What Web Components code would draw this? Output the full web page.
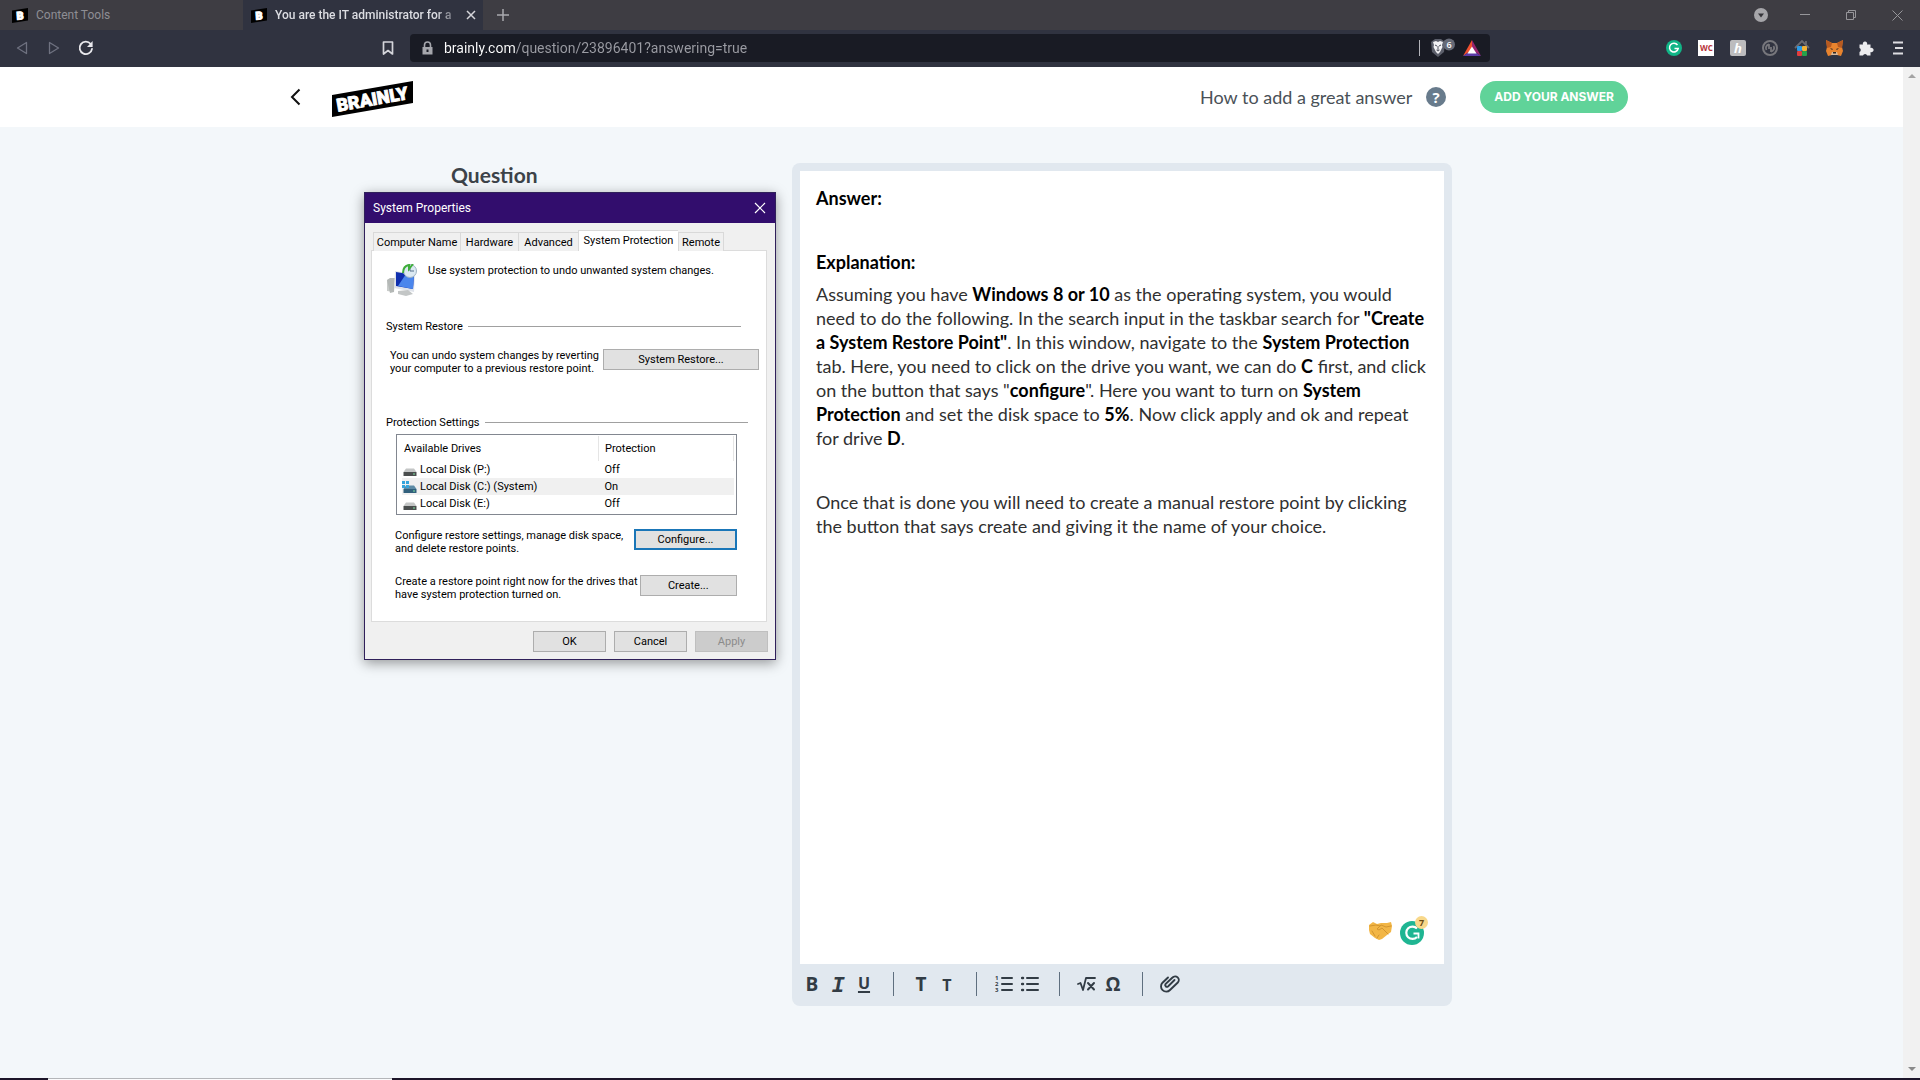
<!DOCTYPE html>
<html lang="en">
<head>
<meta charset="utf-8">
<title>Brainly</title>
<style>
html, body { margin: 0; height: 100%; overflow: hidden; background: #f3f7fa; }
body { font-family: "Open Sans", "Liberation Sans", sans-serif; }
</style>
</head>
<body>
<brainly-desktop></brainly-desktop>
<script>
const define = (name, html) => {
  const tpl = document.createElement('template');
  tpl.innerHTML = html;
  customElements.define(name, class extends HTMLElement {
    constructor() {
      super();
      this.attachShadow({ mode: 'open' }).append(tpl.content.cloneNode(true));
    }
  });
};
const resetButton = 'button{font:inherit;color:inherit;border:0;background:none;padding:0;margin:0;display:flex;align-items:center;justify-content:center}svg{display:block}';

define('brand-mark', `
<style>:host{display:flex;width:16px;height:15px;color:#fff}svg{display:block}
text{font:900 11px "Roboto","Liberation Sans",sans-serif;fill:#fff;stroke:#fff;stroke-width:1}</style>
<svg width="16" height="15" viewBox="0 0 16 15"><path d="M0 2.500L16 0V12.500L0 15Z" fill="#000"/><text x="4.500" y="11.500" transform="rotate(-4 8 7)">B</text></svg>`);

define('tab-strip', `
<style>${resetButton}
:host{display:flex;height:30px;background:#3e3d43;color:#8e8e94;font:12px/16px "Roboto",sans-serif;overflow:hidden}
.tab{display:flex;align-items:center;gap:8px;width:240px;box-sizing:border-box;padding:0 8px}
.first{width:243px;padding-left:12px}
.active{background:#303340;color:#dcdde2}
.title{flex:1;white-space:nowrap;text-align:left;font-weight:400}
.active .title{flex:0 0 180px;font-weight:500;-webkit-mask-image:linear-gradient(90deg,#000 90%,rgba(0,0,0,.3))}
.plus{width:40px;color:#b4b4ba}
.win{margin-left:auto;display:flex;align-items:center}
.win button{width:46px;height:30px}
.win .search{width:42px}
</style>
<div class="tab first"><brand-mark></brand-mark><span class="title">Content Tools</span></div>
<div class="tab active"><brand-mark></brand-mark><span class="title">You are the IT administrator for a</span>
<button aria-label="Close tab"><svg width="16" height="16" viewBox="0 0 16 16"><path d="M4 4l8 8M12 4l-8 8" stroke="#d5d5da" stroke-width="1.500"/></svg></button></div>
<button class="plus" aria-label="New tab"><svg width="12" height="12" viewBox="0 0 12 12"><path d="M6 0v12M0 6h12" stroke="#a9a9af" stroke-width="1.500"/></svg></button>
<div class="win">
<button class="search" aria-label="Search tabs"><svg width="14" height="14" viewBox="0 0 14 14"><circle cx="7" cy="7" r="7" fill="#a6a6aa"/><path d="M4 5.500h6L7 9.500z" fill="#35353a"/></svg></button>
<button aria-label="Minimize"><svg width="10" height="10" viewBox="0 0 10 10"><path d="M0 4.500h10" stroke="#96969a"/></svg></button>
<button aria-label="Restore"><svg width="10" height="10" viewBox="0 0 10 10"><path d="M.5 2.500h7v7h-7zM2.500 2.500v-2h7v7h-2" fill="none" stroke="#96969a"/></svg></button>
<button aria-label="Close"><svg width="11" height="11" viewBox="0 0 11 11"><path d="M.5.5l10 10M10.500.5l-10 10" stroke="#96969a"/></svg></button>
</div>`);

define('nav-bar', `
<style>${resetButton}
:host{display:flex;align-items:center;height:37px;background:#303340;box-sizing:border-box;padding-bottom:1px}
.left{flex:0 0 410px;display:flex;align-items:center;box-sizing:border-box;padding:0 10px 0 6px}
.left button,.right button{width:32px;height:32px}
.left .mark{margin-left:auto;width:24px}
.bar{flex:1;min-width:0;display:flex;align-items:center;height:28px;background:#191b24;border-radius:4px;box-sizing:border-box;padding:0 8px 0 12px}
input{flex:1;min-width:0;border:0;outline:0;margin:0 0 0 11px;padding:0;background:linear-gradient(90deg,#fff 72px,#9b9ca3 72px);-webkit-background-clip:text;background-clip:text;color:transparent;font:14px/20px "Roboto",sans-serif;height:20px}
.rule{width:1px;height:16px;background:#b3b4ba;margin-right:10px}
.right{flex:0 0 430px;display:flex;align-items:center;justify-content:flex-end;box-sizing:border-box;padding-right:6px}
text{font-family:"Open Sans",sans-serif}
</style>
<div class="left">
<button aria-label="Back"><svg width="12" height="14" viewBox="0 0 12 14"><path d="M10.500 1.500v11L1.500 7z" fill="none" stroke="#6f7280" stroke-width="1.300" stroke-linejoin="round"/></svg></button>
<button aria-label="Forward"><svg width="12" height="14" viewBox="0 0 12 14"><path d="M1.500 1.500v11l9-5.500z" fill="none" stroke="#6f7280" stroke-width="1.300" stroke-linejoin="round"/></svg></button>
<button aria-label="Reload"><svg width="16" height="16" viewBox="0 0 16 16"><path d="M12.700 4A6.200 6.200 0 1 0 14 8.800" fill="none" stroke="#e8e8ec" stroke-width="1.800" stroke-linecap="round"/><path d="M14.600 1v6H9z" fill="#e8e8ec"/></svg></button>
<button class="mark" aria-label="Bookmark"><svg width="12" height="14" viewBox="0 0 12 14"><path d="M1.500 1h9v12L6 9.500 1.500 13z" fill="none" stroke="#d4d5da" stroke-width="1.700" stroke-linejoin="round"/></svg></button>
</div>
<div class="bar">
<svg width="11" height="14" viewBox="0 0 11 14"><path d="M2.500 6V4a3 3 0 0 1 6 0v2" fill="none" stroke="#a5a6ac" stroke-width="1.600"/><path fill-rule="evenodd" d="M.5 6h10v7.500H.5zM4.500 8.500v2.500h2V8.500z" fill="#a5a6ac"/></svg>
<input aria-label="Address" value="brainly.com/question/23896401?answering=true">
<span class="rule"></span>
<button aria-label="Shields"><svg width="26" height="20" viewBox="0 0 26 20"><path d="M1 4l4-3h6l4 3-1 10-6 5-6-5z" fill="#5b5e6a"/><path d="M3 4l3-1 2 1 2-1 3 1-1 3 .5 2-2.500 5-2 2-2-2L3.500 9 4 7z" fill="#f2f2f5"/><path d="M5 7l2 1M11 7L9 8M8 8v4M6.500 12l1.500 1 1.500-1" stroke="#4a4d59" fill="none"/><circle cx="19" cy="6.500" r="6" fill="#666a77"/><text x="16.500" y="9.500" font-size="9" font-weight="600" fill="#fff">6</text></svg></button>
<button aria-label="Rewards"><svg width="20" height="18" viewBox="0 0 20 18" style="margin-left:6px"><path d="M10 1L1 17l9-6z" fill="#f0502f"/><path d="M10 1l9 16-9-6z" fill="#97246e"/><path d="M1 17h18l-9-6z" fill="#5b3aa6"/><path d="M10 7.500l4.500 7h-9z" fill="#fff"/></svg></button>
</div>
<div class="right">
<button aria-label="Grammarly"><svg width="16" height="16" viewBox="0 0 16 16"><circle cx="8" cy="8" r="8" fill="#11b587"/><path d="M11.500 5A4.400 4.400 0 1 0 12.200 8.500H8.500" fill="none" stroke="#fff" stroke-width="1.500"/></svg></button>
<button aria-label="WC"><svg width="16" height="16" viewBox="0 0 16 16"><path fill="#fff" d="M0 0h16v16H0z"/><text x="2" y="11" font-size="8" font-weight="700" fill="#b8323a">WC</text></svg></button>
<button aria-label="Honey"><svg width="16" height="16" viewBox="0 0 16 16"><rect width="16" height="16" rx="2" fill="#bcbcbe"/><text x="4" y="13" font-size="13" font-style="italic" font-weight="700" fill="#fff">h</text></svg></button>
<button aria-label="Sync"><svg width="16" height="16" viewBox="0 0 16 16"><circle cx="8" cy="8" r="7" fill="none" stroke="#77777c" stroke-width="2"/><path d="M7 4.500a3.500 3.500 0 0 0-2.500 5.500M9 11.500a3.500 3.500 0 0 0 2.500-5.500M7 4v5M9 7v5" fill="none" stroke="#77777c" stroke-width="1.800"/></svg></button>
<button aria-label="Home"><svg width="16" height="18" viewBox="0 0 16 18"><path d="M1 9l7-7 7 7M12 2v4" fill="none" stroke="#6a6a70" stroke-width="1.800"/><rect x="3" y="7" width="5" height="5" rx="1" fill="#2a9be8"/><rect x="8" y="7" width="5" height="5" rx="1" fill="#f2b134"/><rect x="3" y="12" width="5" height="5" rx="1" fill="#e23d3d"/><rect x="8" y="12" width="5" height="5" rx="1" fill="#26a14b"/></svg></button>
<button aria-label="MetaMask"><svg width="17" height="16" viewBox="0 0 17 16"><path d="M0 0l6 3h5l6-3-1 7 1 4-2 5-4-1H6l-4 1-2-5 1-4z" fill="#e8842e"/><path d="M0 0l6 3-1 4-4 1zM17 0l-6 3 1 4 4 1z" fill="#b85a20"/><path d="M6 12h5l1 3H5z" fill="#d9b99a"/><path d="M4 8l3 1-1 1zM13 8l-3 1 1 1zM7 12h3v1.500H7z" fill="#2d2926"/></svg></button>
<button aria-label="Extensions"><svg width="16" height="16" viewBox="0 0 16 16"><path d="M1.500 4.500H5a2.200 2.200 0 1 1 4 0h3.500V8a2.200 2.200 0 1 1 0 4v3.500H9.200a2.200 2.200 0 0 0-4.200 0H1.500V12a2.200 2.200 0 0 0 0-4z" fill="#ececee"/></svg></button>
<button aria-label="Menu"><svg width="12" height="14" viewBox="0 0 12 14"><path d="M1 1.500h10M3 7h8M1 12.500h10" stroke="#dddde1" stroke-width="2"/></svg></button>
</div>`);

define('site-header', `
<style>${resetButton}
:host{display:block;background:#fff}
.in{max-width:1353px;margin:0 auto;height:60px;display:flex;align-items:center}
.back{width:40px;height:40px}
.logo{margin:4px 0 0 17px}
.logo text{font:900 18px "Roboto",sans-serif;fill:#fff;stroke:#fff;stroke-width:.8}
.how{margin-left:auto;display:flex;align-items:center;gap:14px;color:#4a5157;font:400 18px/24px var(--copy);text-decoration:none}
.add{margin-left:34px;height:32px;padding:0 14px;border-radius:16px;background:#60d399;color:#fff;font:700 12px/16px "Inter",sans-serif}
.q{font:700 15px "Open Sans",sans-serif}
.how svg{overflow:visible}
</style>
<div class="in">
<button class="back" aria-label="Back"><svg width="11" height="18" viewBox="0 0 11 18"><path d="M9.500 1.500L2 9l7.500 7.500" fill="none" stroke="#111" stroke-width="2"/></svg></button>
<a class="logo" href="#" aria-label="Brainly home"><svg width="81" height="38" viewBox="0 0 81 38"><path d="M0 15L81 1v22L0 37z" fill="#000"/><g transform="rotate(-10 40 19)"><text x="4" y="25.500">BRAINLY</text></g></svg></a>
<a class="how" href="#">How to add a great answer<svg width="20" height="20" viewBox="0 0 20 20"><circle cx="10" cy="10" r="10" fill="#687b8c"/><text class="q" x="6.500" y="15.500" fill="#fff">?</text></svg></a>
<button class="add">ADD YOUR ANSWER</button>
</div>`);

define('format-bar', `
<style>${resetButton}
:host{display:flex;align-items:center;height:42px;box-sizing:border-box;padding:0 0 2px 7px;margin-left:-8px;color:#323c45}
.g{display:flex;align-items:center;height:24px}
.g+.g{border-left:1px solid #5f6f7f;margin-left:16px;padding-left:14px}
button{width:26px;height:26px;font:700 19px/24px "Open Sans",sans-serif}
.i{font-style:italic;font-family:"Liberation Mono",monospace;font-size:22px;padding-top:5px}
.u{text-decoration:underline;text-decoration-thickness:2px;text-underline-offset:2px;font-size:16px;padding-bottom:2px}
.t{font-size:16px;padding-top:2px}
text{font:700 6px "Open Sans",sans-serif;fill:#323c45}
</style>
<div class="g"><button aria-label="Bold">B</button><button class="i" aria-label="Italic">I</button><button class="u" aria-label="Underline">U</button></div>
<div class="g"><button aria-label="Large text">T</button><button class="t" aria-label="Small text">T</button></div>
<div class="g"><button aria-label="Numbered list"><svg width="18" height="18" viewBox="0 0 18 18"><path d="M7 3h10M7 9h10M7 15h10" stroke="#323c45" stroke-width="2" stroke-linecap="round"/><text x="0" y="5">1</text><text x="0" y="11">2</text><text x="0" y="17">3</text></svg></button><button aria-label="Bulleted list"><svg width="18" height="18" viewBox="0 0 18 18"><path d="M6 3h11M6 9h11M6 15h11" stroke="#323c45" stroke-width="2" stroke-linecap="round"/><path d="M1 3h1M1 9h1M1 15h1" stroke="#323c45" stroke-width="2.500" stroke-linecap="round"/></svg></button></div>
<div class="g"><button aria-label="Equation"><svg width="20" height="18" viewBox="0 0 20 18"><path d="M1 9l2.500-1L6 15 9 3h9" fill="none" stroke="#323c45" stroke-width="1.800" stroke-linecap="round" stroke-linejoin="round"/><path d="M11 8l6 6.500M17 8l-6 6.500" stroke="#323c45" stroke-width="2" stroke-linecap="round"/></svg></button><button aria-label="Symbols">Ω</button></div>
<div class="g"><button aria-label="Attach"><svg width="22" height="20" viewBox="0 0 22 20"><path d="M15.500 6.500L9 13a1.800 1.800 0 0 1-2.500-2.500l7-6.500a3.600 3.600 0 0 1 5.300 5L11 16.500a5.200 5.200 0 0 1-7.500-7.300L9 4" transform="translate(0 -.5)" fill="none" stroke="#323c45" stroke-width="1.900" stroke-linecap="round"/></svg></button></div>`);

define('answer-editor', `
<style>
:host{display:flex;flex-direction:column;box-sizing:border-box;width:660px;height:843px;padding:8px 8px 0;background:#e1e8ef;border-radius:8px}
.paper{flex:1;background:#fff;box-sizing:border-box;padding:15px 16px;position:relative;color:#303030;font:400 18px/24px var(--copy)}
.text{outline:0;white-space:nowrap}
p{margin:0 0 8px;min-height:24px}
b{font-weight:700;color:#000}
.float{position:absolute;right:16px;bottom:18px;display:flex;align-items:center;gap:8px}
svg{display:block}
text{font:700 9px "Open Sans",sans-serif}
</style>
<div class="paper">
<div class="text" contenteditable="true" role="textbox" aria-label="Answer">
<p><b>Answer:</b></p><p></p><p><b>Explanation:</b></p>
<p>Assuming you have <b>Windows 8 or 10</b> as the operating system, you would<br>need to do the following. In the search input in the taskbar search for <b>"Create</b><br><b>a System Restore Point"</b>. In this window, navigate to the <b>System Protection</b><br>tab. Here, you need to click on the drive you want, we can do <b>C</b> first, and click<br>on the button that says "<b>configure</b>". Here you want to turn on <b>System</b><br><b>Protection</b> and set the disk space to <b>5%</b>. Now click apply and ok and repeat<br>for drive <b>D</b>.</p>
<p></p>
<p>Once that is done you will need to create a manual restore point by clicking<br>the button that says create and giving it the name of your choice.</p>
</div>
<div class="float">
<svg width="23" height="20" viewBox="0 0 23 20"><path d="M0 4l4-3 4 2 4-1 6 0 4-1 1 4-1 6-4 3-5 4-3 1-4-2-5-4-1-4z" fill="#f2b646"/><path d="M1 5l6-1 4 1M22 5l-5 1-5-2-4 4 2 1 3-2 6 6M6 15l-3-5M8 17l2-3" fill="none" stroke="#d2952f" stroke-linecap="round"/></svg>
<svg width="28" height="30" viewBox="0 0 28 30"><circle cx="12" cy="17" r="12" fill="#1fb592"/><path d="M17 12.500a6.200 6.200 0 1 0 0 8.500" fill="none" stroke="#fff" stroke-width="2.200"/><path d="M13.500 17.500h5v5" fill="none" stroke="#fff" stroke-width="1.800"/><circle cx="21.500" cy="6.500" r="6.500" fill="#f8d88a"/><text x="19" y="10" fill="#6b4a12">7</text></svg>
</div>
</div>
<format-bar></format-bar>`);

define('page-scrollbar', `
<style>:host{display:flex;flex-direction:column;justify-content:space-between;align-items:center;flex:0 0 17px;background:#f1f1f1;box-sizing:border-box;padding:7px 0}svg{display:block}</style>
<svg width="8" height="4" viewBox="0 0 8 4"><path d="M4 0l4 4H0z" fill="#a3a3a3"/></svg>
<svg width="8" height="4" viewBox="0 0 8 4"><path d="M4 4l4-4H0z" fill="#8a8a8a"/></svg>`);

define('win-button', `
<style>:host{display:block;flex:0 1 auto;height:21px}
button{width:100%;height:100%;box-sizing:border-box;border:1px solid #adadad;background:#e1e1e1;color:#000;font:inherit;padding:0}
:host([focused]) button{border:2px solid #1a76b8}
:host([off]) button{background:#ccc;border-color:#bfbfbf;color:#8b8b8b}</style>
<button><slot></slot></button>`);

define('group-title', `
<style>:host{display:flex;align-items:center;gap:5px;height:13px}i{flex:1;height:1px;background:#a0a0a0}</style><slot></slot><i></i>`);

define('drive-icon', `
<style>:host{display:block}svg{display:block}.w{display:none}:host([system]) .w{display:block}:host([system]) .a{fill:#5e8ba5}:host([system]) .b{fill:#31607c}</style>
<svg width="15" height="14" viewBox="0 0 15 14"><path class="a" d="M4 5.500h8l2.500 3.500h-13z" fill="#c4c6c6"/><path class="b" d="M1.500 9h13v4h-13z" fill="#4a4e4e"/><path d="M11 11h2" stroke="#7fe0a0"/><path class="w" d="M0 1h3v3H0zM4 1h3v3H4zM0 5h3v3H0zM4 5h3v3H4z" fill="#35a4dc"/></svg>`);

define('drive-list', `
<style>:host{display:block;box-sizing:border-box;border:1px solid #828790;background:#fff;height:81px;padding:1px 2px 0 5px}
table{width:100%;border-collapse:collapse;font:inherit}
th{font-weight:400;text-align:left;height:25px;padding:0 0 0 6px;border-right:1px solid #e5e5e5;vertical-align:middle}
th:first-child{padding-left:2px;width:194px}
td{height:17px;padding:0 0 0 6px}
td:first-child{padding-left:0}
.n{display:flex;align-items:center;gap:3px}
.sel td{background:#f0f0f0}</style>
<table><thead><tr><th>Available Drives</th><th>Protection</th></tr></thead><tbody>
<tr><td><span class="n"><drive-icon></drive-icon>Local Disk (P:)</span></td><td>Off</td></tr>
<tr class="sel"><td><span class="n"><drive-icon system></drive-icon>Local Disk (C:) (System)</span></td><td>On</td></tr>
<tr><td><span class="n"><drive-icon></drive-icon>Local Disk (E:)</span></td><td>Off</td></tr>
</tbody></table>`);

define('system-properties', `
<style>${resetButton}
:host{display:block;width:412px;box-sizing:border-box;border:1px solid #30205a;background:#f0f0f0;box-shadow:0 3px 12px rgba(0,0,0,.4);color:#000;font:11px/13px "Roboto","Liberation Sans",sans-serif;white-space:nowrap}
.title{display:flex;align-items:center;justify-content:space-between;height:30px;background:#320d6d;color:#fff;padding:0 9px 0 8px;font:12px/16px "Roboto",sans-serif}
.body{padding:7px 8px 7px 6px}
.tabs{display:flex;align-items:flex-end;height:21px;padding-left:2px;margin-bottom:-1px;position:relative}
.tabs button{height:19px;border:1px solid #d9d9d9;border-bottom:0;border-right:0;background:#f0f0f0;box-sizing:border-box}
.tabs .on{height:21px;background:#fff;padding-bottom:2px}
.tabs button:last-child{border-right:1px solid #d9d9d9}
.panel{border:1px solid #dcdcdc;background:#fff;height:372px;box-sizing:border-box;padding:13px 7px 0 14px;display:flex;flex-direction:column}
.intro{display:flex;gap:11px;height:56px}
.row{display:flex;justify-content:space-between;align-items:flex-start;gap:2px}
.ok{display:flex;justify-content:flex-end;gap:8px;margin-top:9px;margin-right:-1px}
</style>
<div class="title">System Properties<button aria-label="Close"><svg width="12" height="12" viewBox="0 0 12 12"><path d="M1 1l10 10M11 1L1 11" stroke="#fff" stroke-width="1.200"/></svg></button></div>
<div class="body">
<div class="tabs" role="tablist"><button role="tab" style="width:87px">Computer Name</button><button role="tab" style="width:58px">Hardware</button><button role="tab" style="width:60px">Advanced</button><button role="tab" class="on" aria-selected="true" style="width:100px">System Protection</button><button role="tab" style="width:46px">Remote</button></div>
<div class="panel">
<div class="intro"><svg width="31" height="32" viewBox="0 0 31 32"><path d="M1 16l7-2v14l-7-1z" fill="#c9ccca"/><path d="M1 16l3-2 5 0-1 14-4 1z" fill="#b4b8b6"/><path d="M9 7l20 3-1 18-20-4z" fill="#dfe3ea"/><path d="M10 8l18 3-1 14-17-3z" fill="#0f2fae"/><path d="M12 22l8-12 8 1-1 14z" fill="#4b86ec"/><path d="M12 27l10-1 5 4-7 2-8-2z" fill="#c3c6c6"/><circle cx="24" cy="7" r="6.500" fill="#dce9f2" stroke="#9fb3c2"/><path d="M24 3v4h4" fill="none" stroke="#56718a"/><path d="M17 9q0-7 6-8v4l4-5" fill="none" stroke="#3fae3a" stroke-width="2"/></svg><span>Use system protection to undo unwanted system changes.</span></div>
<group-title style="margin:0 18px 0 0">System Restore</group-title>
<div class="row" style="margin-top:16px;padding-left:4px"><span>You can undo system changes by reverting<br>your computer to a previous restore point.</span><win-button style="width:156px">System Restore...</win-button></div>
<group-title style="margin:41px 11px 0 0">Protection Settings</group-title>
<drive-list style="margin:5px 22px 0 10px"></drive-list>
<div class="row" style="margin:14px 22px 0 9px"><span>Configure restore settings, manage disk space,<br>and delete restore points.</span><win-button focused style="width:103px">Configure...</win-button></div>
<div class="row" style="margin:20px 22px 0 9px"><span>Create a restore point right now for the drives that<br>have system protection turned on.</span><win-button style="width:103px">Create...</win-button></div>
</div>
<div class="ok"><win-button style="width:73px">OK</win-button><win-button style="width:73px">Cancel</win-button><win-button off style="width:73px">Apply</win-button></div>
</div>`);

define('question-page', `
<style>
:host{display:block;flex:1;min-width:0;--copy:"Lato","Open Sans",sans-serif}
main{max-width:1001px;margin:0 auto;padding-top:36px;display:flex;justify-content:space-between}
h2{margin:0;font:700 21px/24px var(--copy);color:#3c4349}
</style>
<site-header></site-header>
<main><h2>Question</h2><answer-editor></answer-editor></main>`);

define('task-edge', `
<style>:host{display:flex;height:2px;background:#1c1529;padding-left:48px}i{width:344px;background:#fafbfc;border-top:1px solid #b4b6b9;box-sizing:border-box}</style><i></i>`);

define('brainly-desktop', `
<style>
:host{display:flex;flex-direction:column;height:100vh;position:relative;background:#f3f7fa}
.view{flex:1;display:flex;min-height:0}
system-properties{position:absolute;left:364px;top:192px}
</style>
<tab-strip></tab-strip><nav-bar></nav-bar>
<div class="view"><question-page></question-page><page-scrollbar></page-scrollbar></div>
<task-edge></task-edge>
<system-properties></system-properties>`);
</script>
</body>
</html>
